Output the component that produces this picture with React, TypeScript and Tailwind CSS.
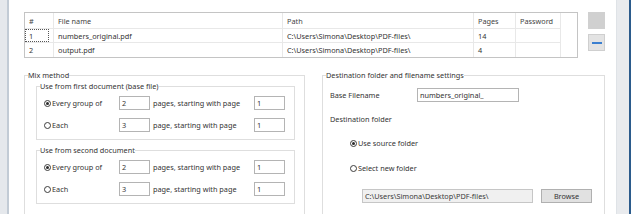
import type { ReactNode } from "react";

function Radio({ checked, label }: { checked?: boolean; label: string }) {
  return (
    <div className="flex items-center gap-[1px]">
      <span className="w-[7px] h-[7px] rounded-full border border-[#3c3c3c] bg-white flex items-center justify-center">
        {checked && <span className="w-[3px] h-[3px] rounded-full bg-[#2a2a2a]" />}
      </span>
      <span>{label}</span>
    </div>
  );
}

function Field({ value, className = "" }: { value: string; className?: string }) {
  return (
    <div className={`h-[14px] border border-[#b4b4b4] bg-white flex items-center pl-[2px] ${className}`}>
      {value}
    </div>
  );
}

function Group({ title, className = "", children }: { title: string; className?: string; children: ReactNode }) {
  return (
    <fieldset className={`border border-[#dedede] ${className}`}>
      <legend className="ml-[3px] px-0 leading-[10px] h-[10px]">{title}</legend>
      {children}
    </fieldset>
  );
}

function RuleRow({ checked, first, second }: { checked?: boolean; first: string; second: string }) {
  return (
    <div className="flex items-center h-[14px]">
      <div className="w-[75px]">
        <Radio checked={checked} label={checked ? "Every group of" : "Each"} />
      </div>
      <Field value={first} className="w-[31px]" />
      <div className="w-[104px] pl-[3px]">{second}</div>
      <Field value="1" className="w-[31px]" />
    </div>
  );
}

function DocGroup({ title, className = "" }: { title: string; className?: string }) {
  return (
    <Group title={title} className={`w-[259px] ${className}`}>
      <div className="flex flex-col gap-[8px] pl-[7px] pt-[5px] pb-[7px]">
        <RuleRow checked first="2" second="pages, starting with page" />
        <RuleRow first="3" second="page, starting with page" />
      </div>
    </Group>
  );
}

const files = [
  { n: "1", name: "numbers_original.pdf", path: "C:\\Users\\Simona\\Desktop\\PDF-files\\", pages: "14" },
  { n: "2", name: "output.pdf", path: "C:\\Users\\Simona\\Desktop\\PDF-files\\", pages: "4" },
];

const cols = ["w-[29px]", "w-[229px]", "w-[191px]", "w-[42px]", "w-[45px]"];

function FileTable() {
  return (
    <div className="w-[554px] h-[46px] border border-[#c4c4c4] bg-white">
      <div className="flex h-[16px] w-[536px] border-b border-[#e8e8e8]">
        {["#", "File name", "Path", "Pages", "Password"].map((h, i) => (
          <div key={h} className={`${cols[i]} border-r border-[#e8e8e8] pl-[4px] flex items-center text-[#444]`}>
            {h}
          </div>
        ))}
      </div>
      {files.map((f, r) => (
        <div key={f.n} className={`flex h-[14px] w-[536px] ${r === 0 ? "border-b border-[#e8e8e8]" : ""}`}>
          <div className={`${cols[0]} border-r border-[#e8e8e8] flex items-center pl-[4px]`}>
            {r === 0 ? (
              <span className="w-full h-full border border-dotted border-[#555] flex items-center pl-[3px] -ml-[4px]">
                {f.n}
              </span>
            ) : (
              f.n
            )}
          </div>
          <div className={`${cols[1]} border-r border-[#e8e8e8] flex items-center pl-[4px]`}>{f.name}</div>
          <div className={`${cols[2]} border-r border-[#e8e8e8] flex items-center pl-[4px]`}>{f.path}</div>
          <div className={`${cols[3]} border-r border-[#e8e8e8] flex items-center pl-[4px]`}>{f.pages}</div>
          <div className={`${cols[4]} border-r border-[#e8e8e8]`} />
        </div>
      ))}
    </div>
  );
}

export default function App() {
  return (
    <div
      className="w-[631px] h-[214px] flex overflow-hidden bg-white text-[7.3px] leading-[10px] text-[#333]"
      style={{ fontFamily: '"Noto Sans", "Open Sans", sans-serif' }}
    >
      {/* left window edge */}
      <div className="w-[7px] bg-[#e5e8ec]" />
      <div className="w-[2px] bg-[#c2cbd5]" />

      <main className="w-[607px] pl-[15px] pt-[12px] flex flex-col">
        <div className="flex gap-[10px]">
          <FileTable />
          <div className="flex flex-col gap-[5px]">
            <div className="w-[17px] h-[17px] bg-[#d0d0d0]" />
            <div className="w-[17px] h-[17px] bg-[#e3e3e3] border border-[#cfcfcf] flex items-center justify-center">
              <span className="w-[10px] h-[2px] bg-[#3b7fd0]" />
            </div>
          </div>
        </div>

        <div className="flex gap-[17px] mt-[12px]">
          {/* Mix method */}
          <Group title="Mix method" className="w-[281px] h-[160px]">
            <div className="pl-[11px] pt-[1px] flex flex-col gap-[5px]">
              <DocGroup title="Use from first document (base file)" />
              <DocGroup title="Use from second document" />
            </div>
          </Group>

          {/* Destination */}
          <Group title="Destination folder and filename settings" className="w-[283px] h-[160px]">
            <div className="flex flex-col pl-[7px]">
              <div className="flex items-center mt-[8px] h-[14px]">
                <div className="w-[87px]">Base Filename</div>
                <Field value="numbers_original_" className="w-[102px]" />
              </div>
              <div className="mt-[12px] h-[10px]">Destination folder</div>
              <div className="mt-[14px] h-[10px] pl-[20px]">
                <Radio checked label="Use source folder" />
              </div>
              <div className="mt-[15px] h-[10px] pl-[20px]">
                <Radio label="Select new folder" />
              </div>
              <div className="mt-[16px] h-[14px] pl-[32px] flex gap-[8px]">
                <div className="w-[171px] h-[14px] border border-[#c6c6c6] bg-[#f0f0f0] flex items-center pl-[2px] text-[#3a3a3a]">
                  C:\Users\Simona\Desktop\PDF-files\
                </div>
                <div className="w-[51px] h-[14px] border border-[#b0b0b0] bg-[#e1e1e1] flex items-center justify-center">
                  Browse
                </div>
              </div>
            </div>
          </Group>
        </div>
      </main>

      {/* right window edge */}
      <div className="w-[13px] bg-[#e9ebee] border-l border-[#dfe3e7]" />
      <div className="w-[2px] bg-[#2b5b8c]" />
    </div>
  );
}
